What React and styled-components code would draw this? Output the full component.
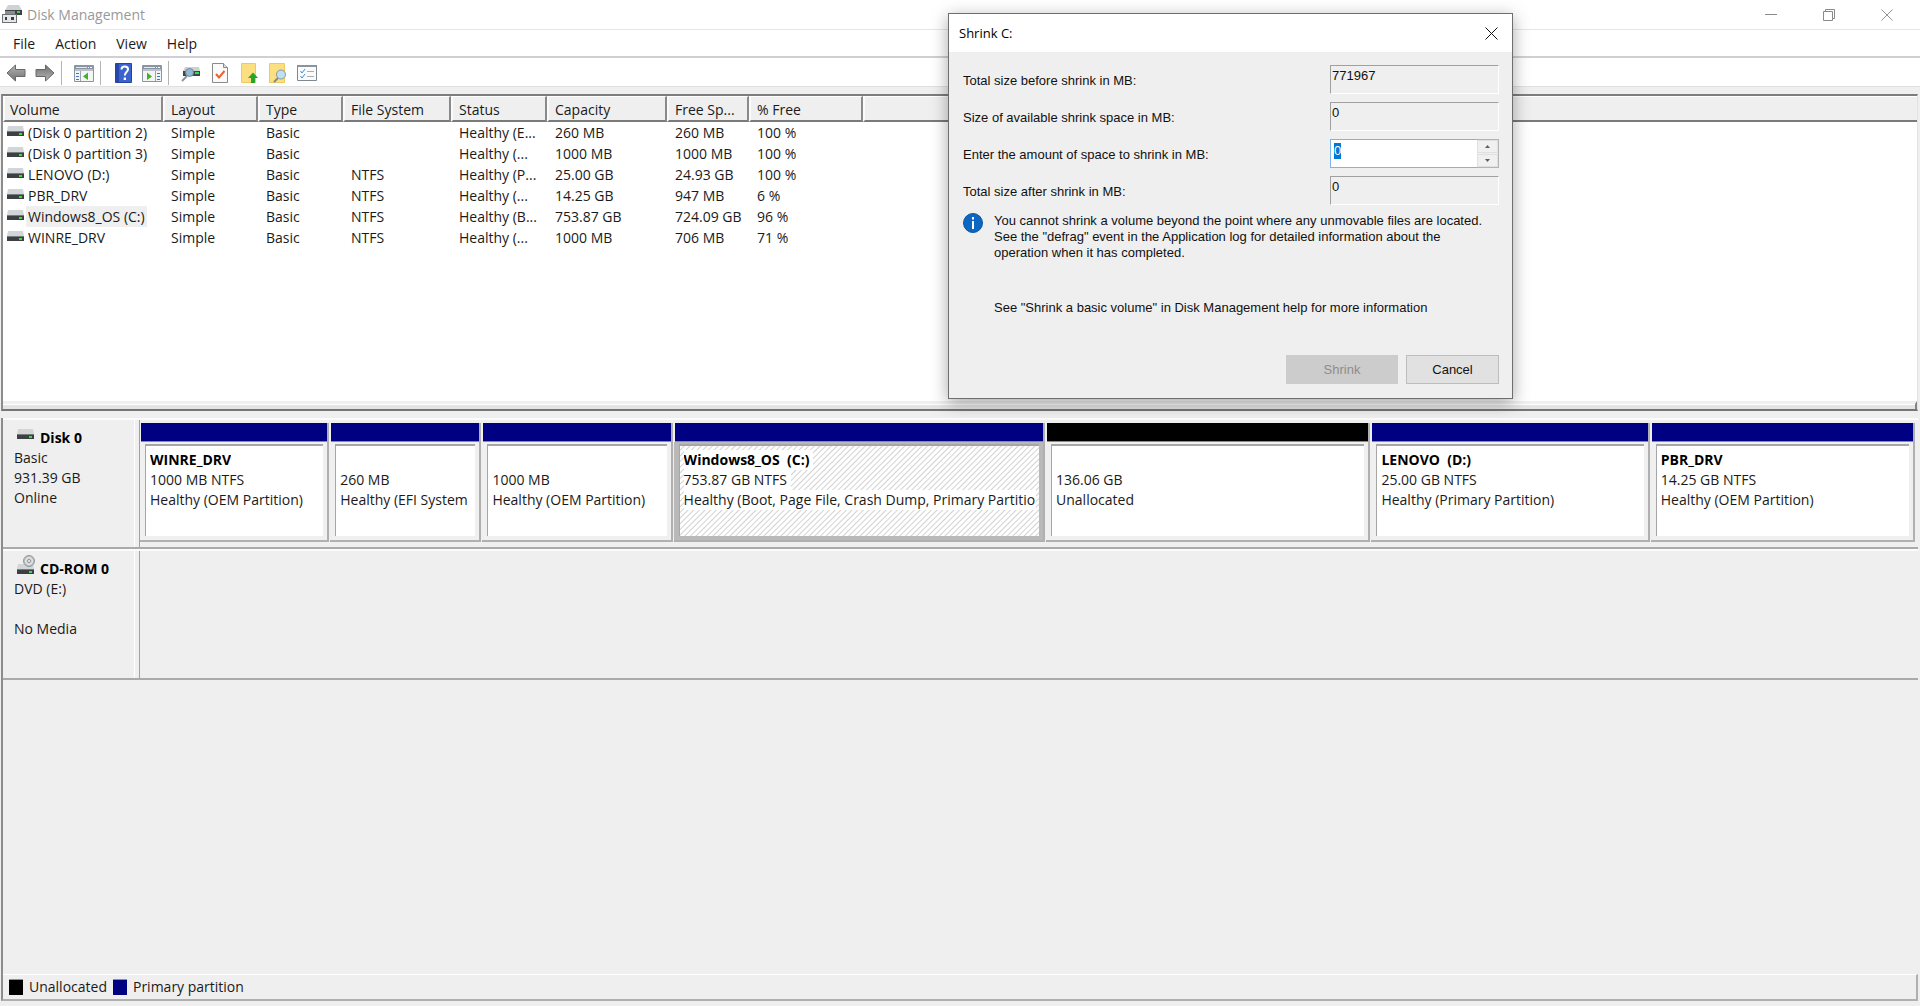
import React, { useEffect, useRef } from "react";
import styled, { createGlobalStyle } from "styled-components";

const GlobalStyle = createGlobalStyle`
  * {
    box-sizing: border-box;
  }

  body {
    margin: 0;
    background: #ffffff;
    color: #1a1a1a;
    font-family: "Open Sans", "Noto Sans", sans-serif;
    font-size: 14px;
    line-height: 20px;
  }

  button,
  input {
    font: inherit;
    color: inherit;
    border-radius: 0;
  }
`;

const Window = styled.div`
  display: flex;
  flex-direction: column;
  height: 100vh;
  min-height: 760px;
  overflow: hidden;
`;

const TitleBar = styled.header`
  display: flex;
  align-items: center;
  height: 30px;
  padding: 0 4px 0 2px;
  border-bottom: 1px solid #e6e6e6;
  color: #999999;

  h1 {
    margin: 0 auto 0 5px;
    font-size: 14px;
    font-weight: 400;
  }
`;

const CaptionButton = styled.button`
  display: flex;
  align-items: center;
  justify-content: center;
  width: 58px;
  height: 28px;
  padding: 0;
  border: none;
  background: none;
  color: #8a8a8a;
`;

const MenuBar = styled.nav`
  display: flex;
  align-items: center;
  gap: 20px;
  height: 28px;
  padding: 2px 0 0 13px;
  border-bottom: 2px solid #d0d0d4;

  button {
    padding: 0;
    border: none;
    background: none;
  }
`;

const ToolBar = styled.div`
  display: flex;
  align-items: center;
  gap: 9px;
  height: 29px;
  padding: 2px 0 0 6px;
  border-bottom: 1px solid #e0e0e0;
`;

const ToolButton = styled.button`
  display: flex;
  justify-content: center;
  width: 20px;
  padding: 0;
  border: none;
  background: none;
`;

const ToolDivider = styled.span`
  width: 1px;
  height: 24px;
  margin: 0 3px 0 -3px;
  background: #b4b4b4;
`;

const Workspace = styled.main`
  display: flex;
  flex: 1;
  flex-direction: column;
  min-height: 0;
  padding: 7px 2px 5px 1px;
  background: #efefef;
`;

const VolumePane = styled.section`
  display: flex;
  flex: 318 1 0;
  flex-direction: column;
  justify-content: space-between;
  min-height: 0;
  border-top: 2px solid #7d7d7d;
  border-right: 1px solid #e3e3e3;
  border-bottom: 2px solid #757575;
  border-left: 2px solid #8c8c8c;
  background: #ffffff;
`;

const ScrollStrip = styled.div`
  height: 8px;
  border-top: 3px solid #f0f0f0;
  border-right: 2px solid #858585;
  background: linear-gradient(#ffffff 0 1px, #e4e4e4 1px);
`;

const VolumeTable = styled.table`
  width: 100%;
  border-collapse: separate;
  border-spacing: 0;
  table-layout: fixed;

  th {
    height: 25px;
    padding: 3px 0 0 6px;
    overflow: hidden;
    border-top: 1px solid #ffffff;
    border-left: 2px solid #fbfbfb;
    border-right: 2px solid #8a8a8a;
    border-bottom: 2px solid #7a7a7a;
    background: #efefef;
    font-weight: 400;
    text-align: left;
    white-space: nowrap;
  }

  th:first-child {
    padding-left: 5px;
  }

  th:last-child {
    border-right: none;
  }

  td {
    height: 21px;
    padding: 0 0 0 8px;
    line-height: 21px;
    white-space: nowrap;
  }

  td:first-child {
    padding-left: 4px;
  }
`;

const VolumeName = styled.span`
  display: flex;
  align-items: center;
  gap: 2px;

  svg {
    margin-bottom: 4px;
  }

  span {
    padding: 0 2px;
    background: ${(p) => (p.$selected ? "#efefef" : "none")};
  }
`;

const DiskPane = styled.section`
  display: flex;
  flex: 589 1 0;
  flex-direction: column;
  min-height: 0;
  margin-top: 7px;
  border-bottom: 2px solid #b0b0b0;
  border-left: 2px solid #8c8c8c;
`;

const DiskRow = styled.article`
  display: flex;
  height: 131px;
  border-top: 2px solid #fcfcfc;
  border-bottom: 2px solid #aaaaaa;
`;

const DiskLabel = styled.div`
  width: 137px;
  padding: 8px 0 0 11px;
  border-right: 1px solid #a0a0a0;
  box-shadow: inset -4px 0 #efefef, inset -5px 0 #ffffff;

  p {
    min-height: 20px;
    margin: 0;
  }
`;

const DiskTitle = styled.h2`
  display: flex;
  align-items: center;
  gap: 6px;
  height: 20px;
  margin: 0;
  padding-left: 3px;
  color: #000000;
  font-size: 14px;
  font-weight: 700;
  line-height: 20px;

  svg {
    margin-bottom: 9px;
  }
`;

const Partitions = styled.div`
  display: flex;
  flex: 1;
  gap: 1px;
  height: 122px;
  min-width: 0;
  padding: 3px 3px 0 0;
`;

const Partition = styled.div`
  display: flex;
  flex: ${(p) => p.$size} 1 0;
  flex-direction: column;
  min-width: 0;
  border-right: 2px solid #b0b0b0;
  border-bottom: 2px solid #b0b0b0;
`;

const PartitionBar = styled.div`
  height: 19px;
  margin-left: 1px;
  border-bottom: 1px solid #8c8c8c;
  background: ${(p) => (p.$free ? "#000000" : "#000082")};
`;

const PartitionBody = styled.div`
  flex: 1;
  min-width: 0;
  padding: 2px 4px 4px 5px;
  background: ${(p) => (p.$selected ? "#b9b9b9" : "#f0f0f0")};
`;

const PartitionInfo = styled.div`
  height: 100%;
  padding: 4px 3px 0 4px;
  overflow: hidden;
  border-top: 2px solid #a6a6a6;
  border-left: 1px solid #a6a6a6;
  background: ${(p) =>
    p.$selected
      ? "repeating-linear-gradient(135deg, #ffffff 0 2px, #d2d2d2 3px, #ffffff 4px)"
      : "#ffffff"};

  strong,
  p {
    display: block;
    width: fit-content;
    max-width: 100%;
    min-height: 20px;
    margin: 0;
    padding-right: ${(p) => (p.$selected ? 4 : 0)}px;
    overflow: hidden;
    background: #ffffff;
    white-space: pre;
  }

  strong {
    color: #000000;
  }
`;

const Legend = styled.footer`
  display: flex;
  align-items: center;
  gap: 6px;
  height: 25px;
  margin-top: auto;
  padding-left: 6px;
  border-top: 1px solid #ffffff;
  border-right: 2px solid #b0b0b0;
`;

const Swatch = styled.span`
  width: 14px;
  height: 16px;
  border-top: 1px solid #909090;
  background: ${(p) => p.$color};
`;

const Dialog = styled.div`
  position: absolute;
  top: 13px;
  left: 948px;
  width: 565px;
  border: 1px solid #6e6e6e;
  background: #efefef;
  color: #111111;
  font-family: "Liberation Sans", Arial, sans-serif;
  font-size: 13px;
  line-height: 16px;
  box-shadow: 0 4px 16px rgba(0, 0, 0, 0.35);
`;

const DialogTitle = styled.div`
  display: flex;
  align-items: center;
  justify-content: space-between;
  height: 38px;
  padding: 0 14px 0 10px;
  background: #ffffff;

  h2 {
    margin: 0;
    color: #000000;
    font-family: "Open Sans", "Noto Sans", sans-serif;
    font-size: 13px;
    font-weight: 400;
  }

  button {
    display: flex;
    padding: 0;
    border: none;
    background: none;
  }
`;

const DialogForm = styled.form`
  padding: 13px 13px 14px 14px;
`;

const Field = styled.div`
  display: flex;
  align-items: center;
  justify-content: space-between;
  margin-bottom: 8px;

  label {
    padding-top: 2px;
  }
`;

const ReadOnlyInput = styled.input`
  width: 169px;
  height: 29px;
  padding: 0 0 9px 1px;
  outline: none;
  border: 1px solid;
  border-color: #a0a0a0 #ffffff #ffffff #a0a0a0;
  background: #efefef;
`;

const Spinner = styled.div`
  display: flex;
  width: 169px;
  height: 29px;
  border: 1px solid #b4b4b8;

  input {
    flex: 1;
    min-width: 0;
    margin: -1px 0 -1px -1px;
    padding: 0 0 5px 3px;
    outline: none;
    border: 1px solid #7eb4ea;
    border-right: none;
    background: #ffffff;
    caret-color: transparent;
  }

  input::selection {
    background: #0078d7;
    color: #ffffff;
  }
`;

const SpinnerButtons = styled.div`
  display: grid;
  gap: 1px;
  width: 21px;

  button {
    display: flex;
    align-items: center;
    justify-content: center;
    padding: 0;
    border: 1px solid #e0e0e0;
    background: #f0f0f0;
  }
`;

const Notes = styled.div`
  display: flex;
  gap: 11px;

  p {
    margin: 0 0 39px;
  }

  svg {
    flex: none;
  }
`;

const DialogActions = styled.div`
  display: flex;
  justify-content: flex-end;
  gap: 8px;
`;

const DialogButton = styled.button`
  width: ${(p) => (p.$primary ? 112 : 93)}px;
  height: 29px;
  padding: 0;
  border: 1px solid #bdbdbd;
  background: #e1e1e1;

  &:disabled {
    border-color: #cccccc;
    background: #cccccc;
    color: #8d8d8d;
  }
`;

const columns = [
  ["Volume", 160],
  ["Layout", 95],
  ["Type", 85],
  ["File System", 108],
  ["Status", 96],
  ["Capacity", 120],
  ["Free Sp...", 82],
  ["% Free", 114],
];

const volumes = [
  ["(Disk 0 partition 2)", "Simple", "Basic", "", "Healthy (E...", "260 MB", "260 MB", "100 %"],
  ["(Disk 0 partition 3)", "Simple", "Basic", "", "Healthy (...", "1000 MB", "1000 MB", "100 %"],
  ["LENOVO (D:)", "Simple", "Basic", "NTFS", "Healthy (P...", "25.00 GB", "24.93 GB", "100 %"],
  ["PBR_DRV", "Simple", "Basic", "NTFS", "Healthy (...", "14.25 GB", "947 MB", "6 %"],
  ["Windows8_OS (C:)", "Simple", "Basic", "NTFS", "Healthy (B...", "753.87 GB", "724.09 GB", "96 %"],
  ["WINRE_DRV", "Simple", "Basic", "NTFS", "Healthy (...", "1000 MB", "706 MB", "71 %"],
];

const partitions = [
  { size: 187, name: "WINRE_DRV", space: "1000 MB NTFS", status: "Healthy (OEM Partition)" },
  { size: 149, name: "", space: "260 MB", status: "Healthy (EFI System" },
  { size: 188, name: "", space: "1000 MB", status: "Healthy (OEM Partition)" },
  {
    size: 369,
    name: "Windows8_OS  (C:)",
    space: "753.87 GB NTFS",
    status: "Healthy (Boot, Page File, Crash Dump, Primary Partition)",
    selected: true,
  },
  { size: 322, name: "", space: "136.06 GB", status: "Unallocated", free: true },
  { size: 276, name: "LENOVO  (D:)", space: "25.00 GB NTFS", status: "Healthy (Primary Partition)" },
  { size: 262, name: "PBR_DRV", space: "14.25 GB NTFS", status: "Healthy (OEM Partition)" },
];

const DriveShape = () => (
  <>
    <path d="M1 0h15l1 5H0z" fill="#d3d6d8" />
    <path d="M0 5h17v5H0z" fill="#3c4043" />
    <path d="M0 5h17v1H0z" fill="#777b7e" />
    <path d="M12 7h3v2h-3z" fill="#35e13f" />
  </>
);

const DriveIcon = () => (
  <svg width="17" height="10" viewBox="0 0 17 10" aria-hidden="true">
    <DriveShape />
  </svg>
);

const CdIcon = () => (
  <svg width="17" height="19" viewBox="0 0 17 19" overflow="visible" aria-hidden="true">
    <g transform="translate(0 9)">
      <DriveShape />
    </g>
    <circle cx="12" cy="6" r="5.500" fill="#bcbfc1" stroke="#96999b" />
    <circle cx="12" cy="6" r="3.500" fill="#cfd2d4" stroke="#e9ebec" />
    <circle cx="12" cy="6" r="1.500" fill="#ffffff" stroke="#8e9193" />
  </svg>
);

const AppIcon = () => (
  <svg width="20" height="19" viewBox="0 0 20 19" aria-hidden="true">
    <path d="M6 0h11l3 5H3z" fill="#d0d3d5" />
    <path d="M3 5h17v5H3z" fill="#3d4143" />
    <path d="M15 6h3v2h-3z" fill="#35d843" />
    <path d="M3 6h10v3H3z" fill="#8a8d8f" />
    <path d="M0 9h15v9H0z" fill="#6f7274" />
    <path d="M1 10h13v7H1z" fill="#e6e7e8" />
    <path d="M3 12h2v3H3zM9 12h3v3H9z" fill="#3b3d3f" />
  </svg>
);

const ArrowIcon = ({ right }) => (
  <svg width="20" height="18" viewBox="0 0 20 18" aria-hidden="true">
    <defs>
      <linearGradient id={right ? "fwd" : "back"} x1="0" y1="0" x2="0" y2="1">
        <stop offset="0" stopColor="#b5b5b5" />
        <stop offset="1" stopColor="#707070" />
      </linearGradient>
    </defs>
    <path
      d="M1 9 9.500 1v4.500H19v7H9.500V17z"
      fill={`url(#${right ? "fwd" : "back"})`}
      stroke="#686868"
      transform={right ? "rotate(180 10 9)" : undefined}
    />
  </svg>
);

const PaneIcon = ({ right }) => (
  <svg width="20" height="17" viewBox="0 0 20 17" aria-hidden="true">
    <path d="M.5.5h19v16H.5z" fill="#f3f4f6" stroke="#8f959e" />
    <path d="M1 1h18v3H1z" fill="#8893a3" />
    <path d="M2 2h11v1H2z" fill="#e6eaf0" />
    <path d="M14 2h1v1h-1zM16 2h2v1h-2z" fill="#ffffff" />
    <path d="M1 4h18v2H1z" fill="#b9c0ca" />
    {right ? (
      <>
        <path d="M13.500 6v10" stroke="#9aa3af" />
        <path d="M15 8.500h3M15 11.500h3M15 14.500h3" stroke="#3d79bd" />
        <path d="m5 7.500 5 4-5 3.500z" fill="#43b02a" />
      </>
    ) : (
      <>
        <path d="M6.500 6v10" stroke="#9aa3af" />
        <path d="M2 8.500h3M2 11.500h3M2 14.500h3" stroke="#3d79bd" />
        <path d="m14 7.500-5 4 5 3.500z" fill="#43b02a" />
      </>
    )}
  </svg>
);

const HelpIcon = () => (
  <svg width="17" height="20" viewBox="0 0 17 20" aria-hidden="true">
    <path d="M.5.5h16v19H.5z" fill="#3b62cf" stroke="#25449d" />
    <path d="M1 1h3v18H1z" fill="#2648ab" />
    <path
      d="M6.500 6.500c0-4 6.500-3.700 6.500-.3C13 9 9.800 9 9.800 12.500"
      fill="none"
      stroke="#ffffff"
      strokeWidth="2"
    />
    <path d="M8.700 14.500H11V17H8.700z" fill="#ffffff" />
  </svg>
);

const RescanIcon = () => (
  <svg width="20" height="17" viewBox="0 0 20 17" aria-hidden="true">
    <path d="M4 2h14l1 4H2z" fill="#cdd1d3" />
    <path d="M2 6h17v5H2z" fill="#414547" />
    <path d="M14 7h4v2h-4z" fill="#36df42" />
    <path d="m1 16 5-5" stroke="#8b959b" strokeWidth="2" />
    <circle cx="8.500" cy="7.500" r="4" fill="#8fb9d4" stroke="#73899a" />
  </svg>
);

const CheckPageIcon = () => (
  <svg width="16" height="20" viewBox="0 0 16 20" aria-hidden="true">
    <path d="M.5.5h11l4 4v15H.5z" fill="#fafafa" stroke="#8a8a8a" />
    <path d="M11.500.5v4h4" fill="#dddddd" stroke="#8a8a8a" />
    <path d="m4 11 3 3.500L12.500 8" fill="none" stroke="#f0602c" strokeWidth="2" />
  </svg>
);

const FolderUpIcon = () => (
  <svg width="17" height="20" viewBox="0 0 17 20" aria-hidden="true">
    <path d="M.5.5h14v19H.5z" fill="#fbdf80" stroke="#edca5f" />
    <path d="M12 9.500 17 15h-3v5h-4v-5H7z" fill="#27a52b" />
  </svg>
);

const FolderSearchIcon = () => (
  <svg width="18" height="20" viewBox="0 0 18 20" aria-hidden="true">
    <path d="M.5.5h15v19H.5z" fill="#fbdf80" stroke="#edca5f" />
    <path d="m5 19 4-4" stroke="#8b8a78" strokeWidth="2" />
    <circle cx="12" cy="11.500" r="4.500" fill="#bfe0ef" stroke="#8098a6" />
  </svg>
);

const ChecklistIcon = () => (
  <svg width="20" height="16" viewBox="0 0 20 16" aria-hidden="true">
    <path d="M.5.5h19v15H.5z" fill="#fbfbfb" stroke="#7f8993" />
    <path d="M0 0h20v2H0z" fill="#8a94a0" />
    <path d="m3.500 6 1.500 2 3-4M3.500 11 5 13l3-4" fill="none" stroke="#3a8fd9" />
    <path d="M10 6.500h7M10 11.500h7" stroke="#a9adb2" />
  </svg>
);

const CrossIcon = ({ size }) => (
  <svg width={size} height={size} viewBox="0 0 13 13" aria-hidden="true">
    <path d="m.5.5 12 12M12.500.5l-12 12" stroke="currentColor" />
  </svg>
);

const InfoIcon = () => (
  <svg width="20" height="20" viewBox="0 0 20 20" aria-hidden="true">
    <circle cx="10" cy="10" r="9.500" fill="#0b67c2" stroke="#0a569f" />
    <path d="M9 4h2v2.500H9zM9 8h2v8H9z" fill="#ffffff" />
  </svg>
);

const ShrinkDialog = () => {
  const amountRef = useRef();

  useEffect(() => {
    amountRef.current.focus();
    amountRef.current.select();
  }, []);

  return (
    <Dialog role="dialog" aria-labelledby="shrink-title">
      <DialogTitle>
        <h2 id="shrink-title">Shrink C:</h2>
        <button type="button" aria-label="Close">
          <CrossIcon size={13} />
        </button>
      </DialogTitle>
      <DialogForm onSubmit={(e) => e.preventDefault()}>
        <Field>
          <label htmlFor="before">Total size before shrink in MB:</label>
          <ReadOnlyInput id="before" readOnly value="771967" />
        </Field>
        <Field>
          <label htmlFor="available">Size of available shrink space in MB:</label>
          <ReadOnlyInput id="available" readOnly value="0" />
        </Field>
        <Field>
          <label htmlFor="amount">Enter the amount of space to shrink in MB:</label>
          <Spinner>
            <input id="amount" ref={amountRef} defaultValue="0" />
            <SpinnerButtons>
              <button type="button" aria-label="Increase">
                <svg width="5" height="3" viewBox="0 0 5 3">
                  <path d="M0 3 2.500 0 5 3z" fill="#606060" />
                </svg>
              </button>
              <button type="button" aria-label="Decrease">
                <svg width="5" height="3" viewBox="0 0 5 3">
                  <path d="M0 0h5L2.500 3z" fill="#606060" />
                </svg>
              </button>
            </SpinnerButtons>
          </Spinner>
        </Field>
        <Field>
          <label htmlFor="after">Total size after shrink in MB:</label>
          <ReadOnlyInput id="after" readOnly value="0" />
        </Field>
        <Notes>
          <InfoIcon />
          <div>
            <p>
              You cannot shrink a volume beyond the point where any unmovable files are located.
              <br />
              See the "defrag" event in the Application log for detailed information about the
              <br />
              operation when it has completed.
            </p>
            <p>See "Shrink a basic volume" in Disk Management help for more information</p>
          </div>
        </Notes>
        <DialogActions>
          <DialogButton type="submit" $primary disabled>
            Shrink
          </DialogButton>
          <DialogButton type="button">Cancel</DialogButton>
        </DialogActions>
      </DialogForm>
    </Dialog>
  );
};

const VolumeList = () => (
  <VolumePane>
    <VolumeTable>
      <colgroup>
        {columns.map(([name, width]) => (
          <col key={name} width={width} />
        ))}
        <col />
      </colgroup>
      <thead>
        <tr>
          {columns.map(([name]) => (
            <th key={name}>{name}</th>
          ))}
          <th aria-label="Spare" />
        </tr>
      </thead>
      <tbody>
        {volumes.map(([name, ...cells]) => (
          <tr key={name}>
            <td>
              <VolumeName $selected={name === "Windows8_OS (C:)"}>
                <DriveIcon />
                <span>{name}</span>
              </VolumeName>
            </td>
            {cells.map((cell, i) => (
              <td key={i}>{cell}</td>
            ))}
          </tr>
        ))}
      </tbody>
    </VolumeTable>
    <ScrollStrip />
  </VolumePane>
);

const DiskView = () => (
  <DiskPane>
    <DiskRow>
      <DiskLabel>
        <DiskTitle>
          <DriveIcon />
          Disk 0
        </DiskTitle>
        <p>Basic</p>
        <p>931.39 GB</p>
        <p>Online</p>
      </DiskLabel>
      <Partitions>
        {partitions.map((part, i) => (
          <Partition key={i} $size={part.size}>
            <PartitionBar $free={part.free} />
            <PartitionBody $selected={part.selected}>
              <PartitionInfo $selected={part.selected}>
                <strong>{part.name}</strong>
                <p>{part.space}</p>
                <p>{part.status}</p>
              </PartitionInfo>
            </PartitionBody>
          </Partition>
        ))}
      </Partitions>
    </DiskRow>
    <DiskRow>
      <DiskLabel>
        <DiskTitle>
          <CdIcon />
          CD-ROM 0
        </DiskTitle>
        <p>DVD (E:)</p>
        <p />
        <p>No Media</p>
      </DiskLabel>
    </DiskRow>
    <Legend>
      <Swatch $color="#000000" />
      Unallocated
      <Swatch $color="#000082" />
      Primary partition
    </Legend>
  </DiskPane>
);

export default function App() {
  return (
    <>
      <GlobalStyle />
      <Window>
        <TitleBar>
          <AppIcon />
          <h1>Disk Management</h1>
          <CaptionButton aria-label="Minimize">
            <svg width="12" height="1" viewBox="0 0 12 1">
              <path d="M0 .5h12" stroke="currentColor" />
            </svg>
          </CaptionButton>
          <CaptionButton aria-label="Restore">
            <svg width="12" height="12" viewBox="0 0 12 12">
              <path d="M.5 2.500h9v9h-9zM2.500 2.500v-2h9v9h-2" fill="none" stroke="currentColor" />
            </svg>
          </CaptionButton>
          <CaptionButton aria-label="Close window">
            <CrossIcon size={12} />
          </CaptionButton>
        </TitleBar>
        <MenuBar>
          <button>File</button>
          <button>Action</button>
          <button>View</button>
          <button>Help</button>
        </MenuBar>
        <ToolBar>
          <ToolButton aria-label="Back"><ArrowIcon /></ToolButton>
          <ToolButton aria-label="Forward"><ArrowIcon right /></ToolButton>
          <ToolDivider />
          <ToolButton aria-label="Show console tree"><PaneIcon /></ToolButton>
          <ToolDivider />
          <ToolButton aria-label="Help topics"><HelpIcon /></ToolButton>
          <ToolButton aria-label="Show action pane"><PaneIcon right /></ToolButton>
          <ToolDivider />
          <ToolButton aria-label="Rescan disks"><RescanIcon /></ToolButton>
          <ToolButton aria-label="Check"><CheckPageIcon /></ToolButton>
          <ToolButton aria-label="Up"><FolderUpIcon /></ToolButton>
          <ToolButton aria-label="Find"><FolderSearchIcon /></ToolButton>
          <ToolButton aria-label="Properties"><ChecklistIcon /></ToolButton>
        </ToolBar>
        <Workspace>
          <VolumeList />
          <DiskView />
        </Workspace>
      </Window>
      <ShrinkDialog />
    </>
  );
}
